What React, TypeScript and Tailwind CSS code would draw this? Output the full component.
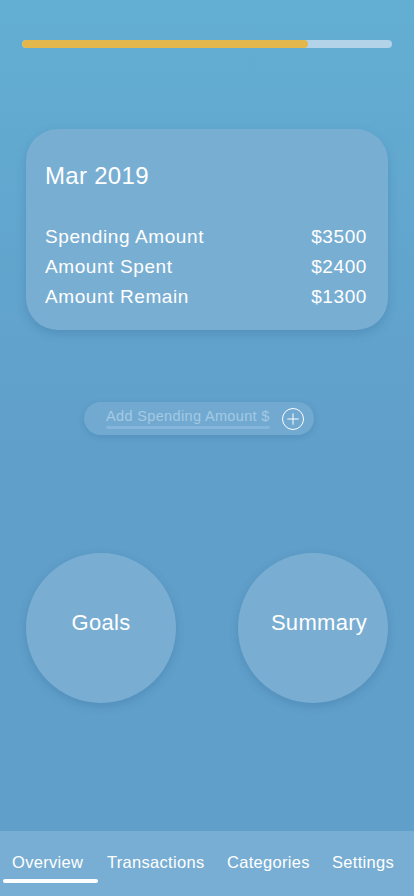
import { Plus } from 'lucide-react'

const rows = [
  { label: 'Spending Amount', value: '$3500' },
  { label: 'Amount Spent', value: '$2400' },
  { label: 'Amount Remain', value: '$1300' },
]

const tabs = [
  { label: 'Overview', w: 'w-[95px]' },
  { label: 'Transactions', w: 'w-[120px]' },
  { label: 'Categories', w: 'w-[105px]' },
  { label: 'Settings', w: 'w-[70px]' },
]

export default function App() {
  return (
    <div
      className="w-[414px] h-[896px] flex flex-col bg-gradient-to-b from-[#63aed3] via-[#609fca] to-[#609fca] text-white overflow-hidden"
      style={{ fontFamily: '"Liberation Sans", Arial, sans-serif' }}
    >
      {/* Progress */}
      <div className="pt-[40px] px-[22px]">
        <div className="h-[8px] w-[370px] rounded-full bg-[#b3d3e8] overflow-hidden">
          <div className="h-full w-[286px] rounded-full bg-[#e3b74c]" />
        </div>
      </div>

      {/* Month card */}
      <div className="mt-[81px] ml-[26px] w-[362px] h-[201px] rounded-[32px] bg-[#79aed3] shadow-[0_4px_10px_rgba(40,90,140,0.25)] pl-[19px] pr-[21px] pt-[33px]">
        <div className="text-[24px] leading-[28px] tracking-[0.3px]">Mar 2019</div>
        <div className="mt-[32px] flex flex-col">
          {rows.map(r => (
            <div key={r.label} className="flex justify-between text-[19px] leading-[30px] tracking-[0.6px]">
              <span>{r.label}</span>
              <span>{r.value}</span>
            </div>
          ))}
        </div>
      </div>

      {/* Add spending */}
      <div className="mt-[72px] ml-[84px] w-[230px] h-[33px] rounded-full bg-[#72a9d1] shadow-[0_2px_6px_rgba(40,90,140,0.2)] flex items-center pl-[22px] pr-[10px]">
        <div className="flex flex-col">
          <span className="text-[14.5px] leading-[17px] tracking-[0.35px] text-[#a4c9e3]">Add Spending Amount $</span>
          <div className="mt-[1px] h-[3px] w-[164px] rounded-full bg-[#86b6da]" />
        </div>
        <div className="ml-auto w-[22px] h-[22px] rounded-full border border-white flex items-center justify-center">
          <Plus size={18} strokeWidth={1.3} />
        </div>
      </div>

      {/* Circles */}
      <div className="mt-[118px] flex justify-between pl-[26px] pr-[26px]">
        <div className="w-[150px] h-[150px] rounded-full bg-[#79aed2] shadow-[0_3px_8px_rgba(40,90,140,0.25)] flex items-center justify-center text-[22px] tracking-[0.3px] pb-[11px]">
          Goals
        </div>
        <div className="w-[150px] h-[150px] rounded-full bg-[#79aed2] shadow-[0_3px_8px_rgba(40,90,140,0.25)] flex items-center justify-center text-[22px] tracking-[0.3px] pb-[11px] pl-[12px]">
          Summary
        </div>
      </div>

      {/* Tab bar */}
      <div className="mt-auto h-[65px] bg-[#78aed3] flex items-start pt-[21px] pl-[12px]">
        {tabs.map((t, i) => (
          <div key={t.label} className={`relative shrink-0 ${t.w} text-[16.5px] leading-[20px] tracking-[0.3px] text-white`}>
            {t.label}
            {i === 0 && (
              <div className="absolute left-[-9px] top-[27px] w-[95px] h-[4px] rounded-full bg-white" />
            )}
          </div>
        ))}
      </div>
    </div>
  )
}
